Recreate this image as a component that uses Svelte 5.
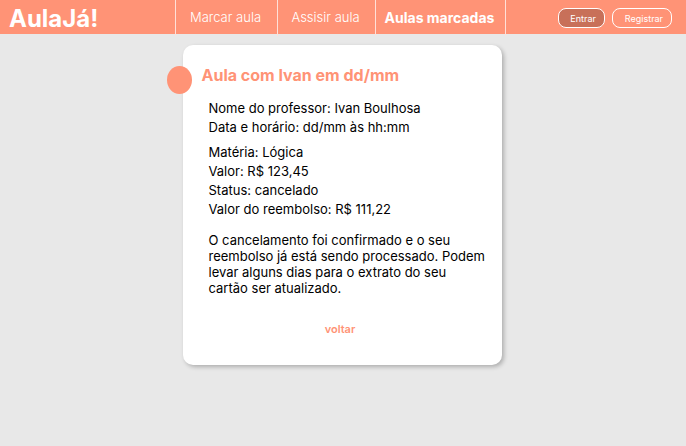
<script>
  const tabs = [
    { label: 'Marcar aula', width: 102 },
    { label: 'Assisir aula', width: 98 },
    { label: 'Aulas marcadas', width: 130, current: true }
  ];
  const summary = [
    ['Nome do professor', 'Ivan Boulhosa'],
    ['Data e horário', 'dd/mm às hh:mm']
  ];
  const details = [
    ['Matéria', 'Lógica'],
    ['Valor', 'R$ 123,45'],
    ['Status', 'cancelado'],
    ['Valor do reembolso', 'R$ 111,22']
  ];
</script>

<header>
  <a class="logo" href="#inicio">AulaJá!</a>
  <nav>
    {#each tabs as tab}
      <a
        href="#aulas"
        class:current={tab.current}
        aria-current={tab.current ? 'page' : undefined}
        style:width="{tab.width}px">{tab.label}</a>
    {/each}
  </nav>
  <div class="account">
    <button class="enter" type="button">Entrar</button>
    <button class="register" type="button">Registrar</button>
  </div>
</header>

<main>
  <article>
    <span class="marker"></span>
    <h1>Aula com Ivan em dd/mm</h1>
    <div class="body">
      <div class="group">
        {#each summary as [name, value]}
          <p>{name}: {value}</p>
        {/each}
      </div>
      <div class="group">
        {#each details as [name, value]}
          <p>{name}: {value}</p>
        {/each}
      </div>
      <p class="notice">
        O cancelamento foi confirmado e o seu reembolso já está sendo processado. Podem levar alguns dias para o extrato do seu cartão ser atualizado.
      </p>
    </div>
    <a class="back" href="#voltar">voltar</a>
  </article>
</main>

<style>
  :global(body) {
    background: #e8e8e8;
    font-family: Inter, "Liberation Sans", sans-serif;
  }

  header {
    display: grid;
    grid-template-columns: 1fr auto 1fr;
    box-sizing: border-box;
    height: 34px;
    padding: 0 14px 0 9px;
    background: #ff9376;
    color: #fff;
  }

  a {
    color: inherit;
    text-decoration: none;
  }

  .logo {
    align-self: center;
    justify-self: start;
    font-size: 24px;
    line-height: 34px;
    font-weight: 700;
    padding-top: 2px;
  }

  nav {
    display: flex;
    border-left: 1px solid #ffe0d8;
  }

  nav a {
    box-sizing: border-box;
    padding-right: 2px;
    border-right: 1px solid #ffe0d8;
    font-size: 13px;
    font-weight: 300;
    line-height: 35px;
    text-align: center;
    white-space: nowrap;
  }

  nav .current {
    font-size: 14px;
    font-weight: 700;
  }

  .account {
    display: flex;
    align-items: center;
    justify-content: flex-end;
    gap: 7px;
  }

  button {
    box-sizing: border-box;
    height: 20px;
    border: 1px solid #fff;
    border-radius: 8px;
    background: transparent;
    color: #fff;
    font-family: inherit;
    font-size: 9px;
    font-weight: 400;
    line-height: 17px;
  }

  .enter {
    padding: 0 8px 0 11px;
    background: #c87059;
  }

  .register {
    padding: 0 8px 0 12px;
  }

  main {
    padding: 11px 18px 11px 16px;
  }

  article {
    position: relative;
    display: flex;
    flex-direction: column;
    box-sizing: border-box;
    max-width: 319px;
    margin: 0 auto;
    padding: 20px 16px 28px 19px;
    border-radius: 10px;
    background: #fff;
    box-shadow: 2px 2px 4px rgba(0, 0, 0, 0.25);
  }

  .marker {
    position: absolute;
    top: 21px;
    left: -16px;
    width: 25px;
    height: 28px;
    border-radius: 50%;
    background: #ff9376;
  }

  h1 {
    margin: 0;
    color: #ff9376;
    font-size: 16px;
    font-weight: 700;
    line-height: 20px;
  }

  .body {
    display: flex;
    flex-direction: column;
    padding: 14px 0 0 7px;
    color: #000;
    font-size: 13px;
    line-height: 19px;
  }

  .group {
    margin-bottom: 6px;
  }

  p {
    margin: 0;
  }

  .notice {
    margin-top: 7px;
    line-height: 16px;
  }

  .back {
    align-self: center;
    margin-top: 25px;
    padding-right: 7px;
    color: #ff9376;
    font-size: 11px;
    font-weight: 600;
    line-height: 16px;
  }
</style>
